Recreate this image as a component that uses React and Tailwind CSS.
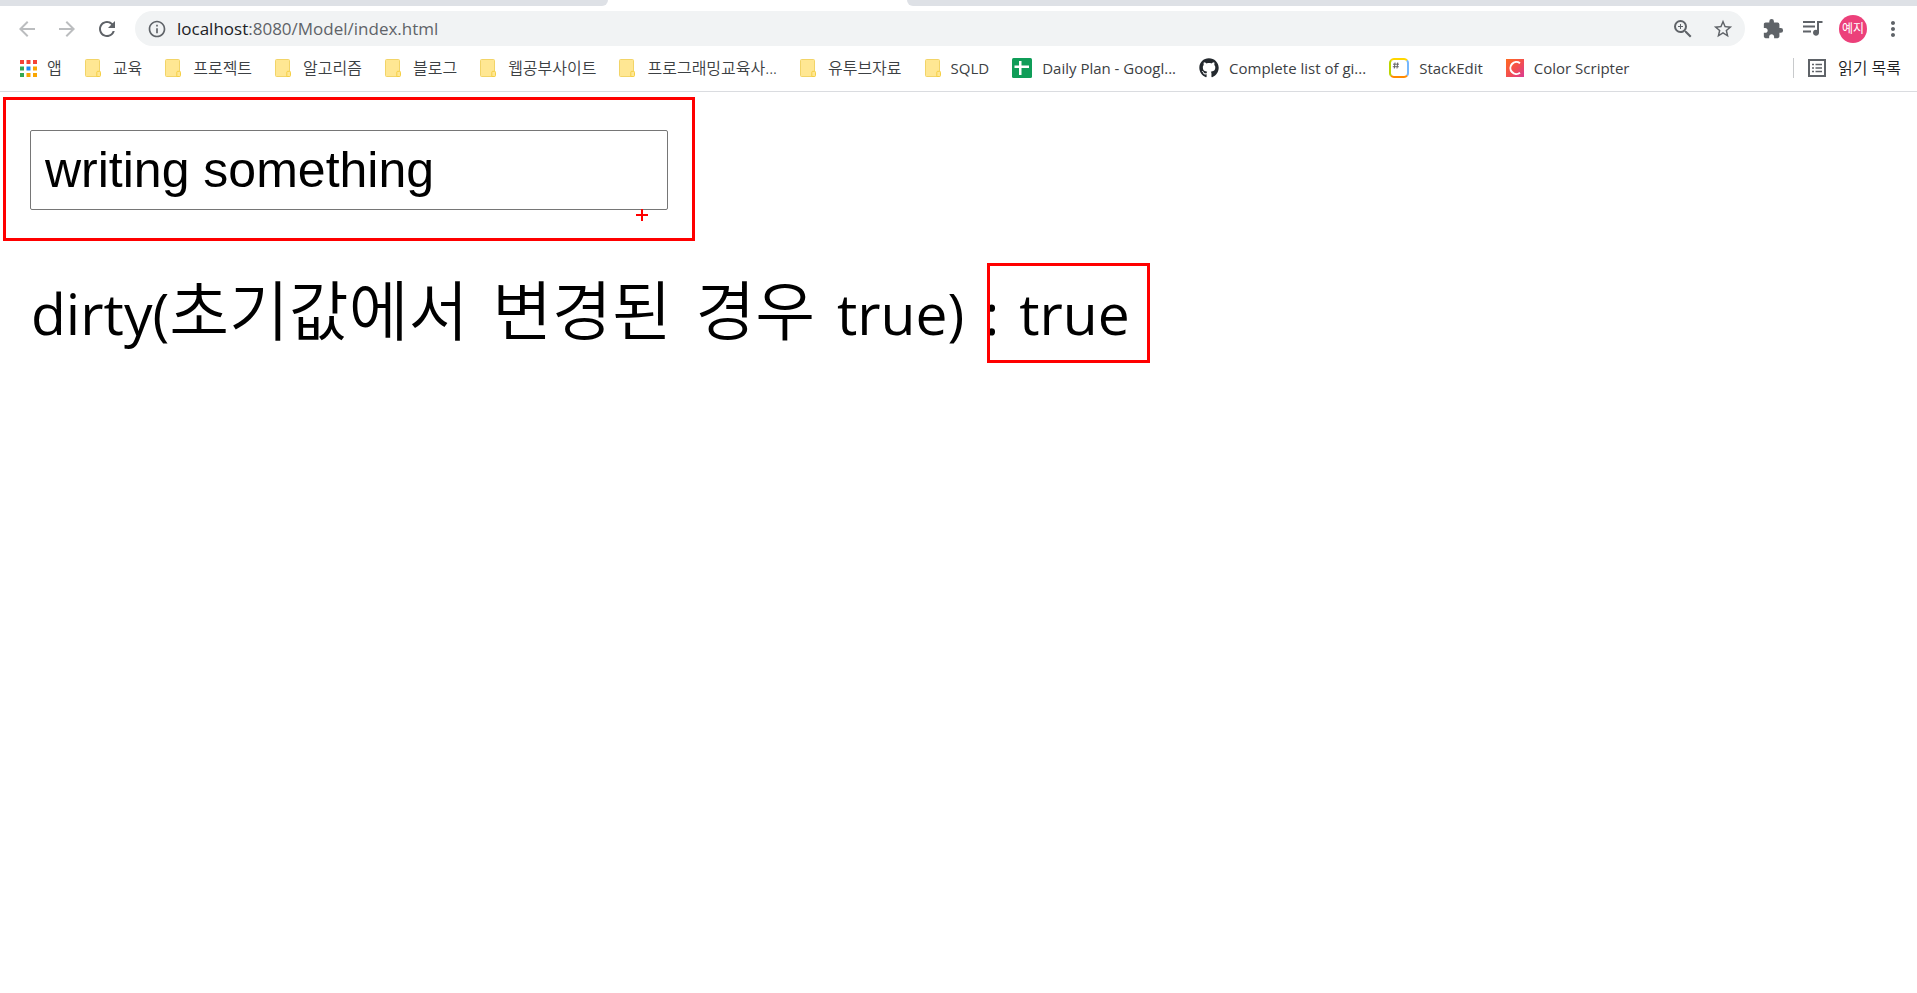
import React, { useState } from 'react';
import {
    MdArrowBack, MdArrowForward, MdRefresh, MdInfoOutline, MdZoomIn,
    MdStarBorder, MdExtension, MdMoreVert
} from 'react-icons/md';
import { FaGithub } from 'react-icons/fa';

// --- BOOKMARK ICONS ---
const AppsIcon = () => (
    <svg width="17" height="17" viewBox="0 0 17 17" className="shrink-0">
        <path fill="#f44336" d="M0 0h4v4H0zM6.500 0h4v4h-4zM13 0h4v4h-4z" />
        <path fill="#34a853" d="M0 6.500h4v4H0z" />
        <path fill="#1e88f5" d="M6.500 6.500h4v4h-4z" />
        <path fill="#f9a602" d="M13 6.500h4v4h-4zM6.500 13h4v4h-4zM13 13h4v4h-4z" />
        <path fill="#34a853" d="M0 13h4v4H0z" />
    </svg>
);

const FolderIcon = () => (
    <svg width="16" height="18" viewBox="0 0 16 18" className="shrink-0">
        <path fill="#ffe793" stroke="#f2d468" d="M1.500.5h12a1 1 0 0 1 1 1v16h-13a1 1 0 0 1-1-1v-15a1 1 0 0 1 1-1z" />
        <path fill="#ffe793" stroke="#f5cf45" d="M11.800 17.500v-4.200a1 1 0 0 1 1-1h1.700a1 1 0 0 1 1 1v3.200a1 1 0 0 1-1 1z" />
    </svg>
);

const SheetIcon = () => (
    <svg width="20" height="20" viewBox="0 0 20 20" className="shrink-0">
        <rect width="20" height="20" rx="1.500" fill="#0f9d58" />
        <path fill="#fff" d="M7 3h2.500v4.500H17V10H9.500v7H7v-7H2.500V7.500H7z" />
    </svg>
);

const StackEditIcon = () => (
    <svg width="20" height="20" viewBox="0 0 20 20" fill="none" strokeWidth="2" className="shrink-0">
        <rect x="1" y="1" width="18" height="18" rx="4" fill="#fff" />
        <path stroke="#ffd600" d="M2 2.300A4 4 0 0 1 5 1h10a4 4 0 0 1 3 1.300" />
        <path stroke="#75b7fd" d="M18 2.300A4 4 0 0 1 19 5v10a4 4 0 0 1-1 2.700" />
        <path stroke="#ff8a00" d="M18 17.700A4 4 0 0 1 15 19H5a4 4 0 0 1-3-1.300" />
        <path stroke="#bbd500" d="M2 17.700A4 4 0 0 1 1 15V5a4 4 0 0 1 1-2.700" />
        <path stroke="#666" strokeWidth="1" d="M6 4.500 5.300 10.500M8.700 4.500 8 10.500M4 6.200h6M3.800 8.700h6" />
    </svg>
);

const ColorScripterIcon = () => (
    <svg width="18" height="18" viewBox="0 0 18 18" className="shrink-0">
        <defs>
            <linearGradient id="scripter" x1="0" y1="0" x2="1" y2="1">
                <stop offset="0" stopColor="#ff6a1f" />
                <stop offset="0.500" stopColor="#f4504c" />
                <stop offset="1" stopColor="#d93a94" />
            </linearGradient>
        </defs>
        <rect width="18" height="18" fill="url(#scripter)" />
        <path fill="none" stroke="#fff" strokeWidth="2" d="M14 4.200A6 6 0 1 0 14 13.800" />
    </svg>
);

const ReadingListIcon = () => (
    <svg width="18" height="18" viewBox="0 0 18 18" fill="none" stroke="#5f6368" className="shrink-0">
        <rect x="1" y="1" width="16" height="16" strokeWidth="2" />
        <path strokeWidth="1.600" d="M4 5.500h2M4 9h2M4 12.500h2M7.500 5.500H14M7.500 9H14M7.500 12.500H14" />
    </svg>
);

const PlaylistIcon = () => (
    <svg width="20" height="17" viewBox="0 0 20 17" fill="#5f6368">
        <path d="M0 1h12v2H0zM0 5.500h12v2H0zM0 10.500h8v2H0z" />
        <path d="M14 1h5.500v2H16v9.700a3 3 0 1 1-2-2.800z" />
    </svg>
);

const BOOKMARKS = [
    { label: '교육', icon: FolderIcon },
    { label: '프로젝트', icon: FolderIcon },
    { label: '알고리즘', icon: FolderIcon },
    { label: '블로그', icon: FolderIcon },
    { label: '웹공부사이트', icon: FolderIcon },
    { label: '프로그래밍교육사...', icon: FolderIcon },
    { label: '유투브자료', icon: FolderIcon },
    { label: 'SQLD', icon: FolderIcon, latin: true },
    { label: 'Daily Plan - Googl...', icon: SheetIcon, latin: true },
    { label: 'Complete list of gi...', icon: () => <FaGithub size={20} className="shrink-0 text-[#24292e]" />, latin: true },
    { label: 'StackEdit', icon: StackEditIcon, latin: true },
    { label: 'Color Scripter', icon: ColorScripterIcon, latin: true },
];

const IconButton = ({ label, className = 'w-10 text-[#5f6368]', children }) => (
    <button type="button" aria-label={label} className={`flex shrink-0 items-center justify-center ${className}`}>
        {children}
    </button>
);

const TabStrip = () => (
    <div className="flex h-[6px] bg-white">
        <div className="w-[608px] rounded-br-lg bg-[#dee1e6]"></div>
        <div className="w-[299px]"></div>
        <div className="flex-1 rounded-bl-lg bg-[#dee1e6]"></div>
    </div>
);

const Toolbar = () => (
    <div className="flex items-center pt-[5px] pr-1 pl-[7px]">
        <IconButton label="뒤로" className="w-10 text-[#bbbdbf]"><MdArrowBack size={24} /></IconButton>
        <IconButton label="앞으로" className="w-10 text-[#bbbdbf]"><MdArrowForward size={24} /></IconButton>
        <IconButton label="새로고침"><MdRefresh size={24} /></IconButton>
        <div className="mx-2 flex h-[35px] flex-1 items-center rounded-full bg-[#f1f3f4] pr-[2px] pl-3">
            <MdInfoOutline size={20} className="shrink-0 text-[#5f6368]" />
            <a href="#page" className="ml-[10px] flex-1 font-['Open_Sans',sans-serif] text-[17px] leading-6 text-[#5f6368]">
                <span className="text-[#202124]">localhost</span>:8080/Model/index.html
            </a>
            <IconButton label="확대/축소"><MdZoomIn size={24} /></IconButton>
            <IconButton label="북마크 추가"><MdStarBorder size={22} /></IconButton>
        </div>
        <IconButton label="확장 프로그램"><MdExtension size={22} /></IconButton>
        <IconButton label="미디어 컨트롤"><PlaylistIcon /></IconButton>
        <button type="button" className="mx-[6px] flex size-7 shrink-0 items-center justify-center rounded-full bg-[#ec407a] text-xs text-white">예지</button>
        <IconButton label="메뉴"><MdMoreVert size={24} /></IconButton>
    </div>
);

const BookmarkBar = () => (
    <nav className="flex h-[46px] items-center border-b border-[#dadce0] pr-4 pb-px pl-5 text-[#3c4043]">
        <div className="flex flex-1 items-center gap-[23px] whitespace-nowrap">
            <a href="#apps" className="flex shrink-0 items-center gap-[10px] text-base font-[350]"><AppsIcon />앱</a>
            {BOOKMARKS.map(({ label, icon: Icon, latin }) => (
                <a
                    key={label}
                    href="#page"
                    className={`flex shrink-0 items-center ${latin ? "gap-[10px] font-['Open_Sans',sans-serif] text-[15px]" : 'gap-3 text-base font-[350]'}`}
                >
                    <Icon />{label}
                </a>
            ))}
        </div>
        <button type="button" className="flex shrink-0 items-center text-base font-[350] whitespace-nowrap text-[#202124]">
            <span className="mr-[14px] h-5 w-px bg-[#c8cacc]"></span>
            <ReadingListIcon />
            <span className="ml-3">읽기 목록</span>
        </button>
    </nav>
);

export default function App() {
    const [text, setText] = useState('writing something');
    const dirty = text !== '';

    return (
        <div className="min-h-screen bg-white font-['Noto_Sans','Noto_Sans_CJK_KR',sans-serif]">
            <header>
                <TabStrip />
                <Toolbar />
                <BookmarkBar />
            </header>

            <main id="page" className="px-[3px] pt-[5px] text-black">
                <div className="relative w-[692px] border-3 border-[#ff0000] px-6 pt-[30px] pb-7">
                    <input
                        type="text"
                        aria-label="내용"
                        value={text}
                        onChange={(e) => setText(e.target.value)}
                        className="block h-20 w-full rounded-xs border border-[#767676] px-[14px] font-['Liberation_Sans',sans-serif] text-[50px] leading-[60px] outline-none"
                    />
                    {/* crosshair cursor */}
                    <svg width="12" height="12" viewBox="0 0 12 12" className="absolute right-11 bottom-[17px]">
                        <path stroke="#ff0000" strokeWidth="2" d="M0 6h12M6 0v12" />
                    </svg>
                </div>

                <p className="mt-[27px] flex items-baseline pl-7 font-['Open_Sans','Noto_Sans_CJK_KR',sans-serif] text-[57px] leading-[84px] whitespace-nowrap">
                    <span className="mr-5">
                        dirty(
                        <span className="text-[65px] font-[350]">
                            <span className="mr-[7px]">초기값에서</span> <span className="mr-[7px]">변경된</span> <span className="mr-[7px]">경우</span>
                        </span>{' '}
                        true)
                    </span>
                    <span>:</span>
                    <span className="relative ml-5">
                        {String(dirty)}
                        <span className="absolute -top-2 -right-5 -bottom-2 -left-8 border-3 border-[#ff0000]"></span>
                    </span>
                </p>
            </main>
        </div>
    );
}
